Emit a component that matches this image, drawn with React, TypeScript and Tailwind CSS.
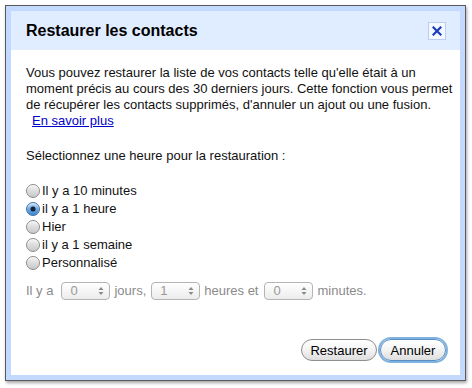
import React from "react";

function Radio({ checked }: { checked?: boolean }) {
  return checked ? (
    <span className="relative inline-block h-[14px] w-[14px] shrink-0 rounded-full border border-[#3d6fa8] bg-gradient-to-b from-[#bcd8f4] via-[#6fa6dc] to-[#3f86d2] shadow-[inset_0_1px_1px_rgba(255,255,255,0.7)]">
      <span className="absolute left-1/2 top-1/2 h-[5px] w-[5px] -translate-x-1/2 -translate-y-1/2 rounded-full bg-[#10213a]" />
    </span>
  ) : (
    <span className="inline-block h-[14px] w-[14px] shrink-0 rounded-full border border-[#8c8c8c] bg-gradient-to-b from-[#f4f4f4] via-[#dcdcdc] to-[#c8c8c8] shadow-[inset_0_1px_1px_rgba(255,255,255,0.8)]" />
  );
}

function Spin({ value }: { value: string }) {
  return (
    <span className="flex h-[18px] w-[49px] items-center justify-between rounded-[4px] border border-[#b4b4b4] bg-gradient-to-b from-[#ffffff] to-[#ececec] pl-[8px] pr-[5px] text-[#999]">
      <span>{value}</span>
      <svg width="6" height="10" viewBox="0 0 6 10">
        <path d="M3 1 L5.5 4 L0.5 4 Z" fill="#8a8a8a" />
        <path d="M3 9 L5.5 6 L0.5 6 Z" fill="#8a8a8a" />
      </svg>
    </span>
  );
}

export default function App() {
  const options = [
    { label: "Il y a 10 minutes" },
    { label: "il y a 1 heure", checked: true },
    { label: "Hier" },
    { label: "il y a 1 semaine" },
    { label: "Personnalisé" },
  ];
  return (
    <div className="h-[388px] w-[472px] bg-white pl-[5px] pt-[5px] font-['Liberation_Sans',Arial,sans-serif] text-[13px] text-[#111]">
      <div className="w-[461px] border border-[#5a5a5a] shadow-[1px_2px_3px_rgba(0,0,0,0.35)]">
        <div className="border-[5px] border-[#c3d9ff]">
          <div className="flex h-[39px] items-center justify-between bg-[#e0ecff] pl-[15px] pr-[14px]">
            <span className="text-[16px] font-bold text-black">Restaurer les contacts</span>
            <span className="flex h-[18px] w-[18px] items-center justify-center border border-[#b9cdf5] bg-[#f4f8ff]">
              <svg width="10" height="10" viewBox="0 0 10 10">
                <path d="M1.5 1.5 L8.5 8.5 M8.5 1.5 L1.5 8.5" stroke="#1c3bbf" strokeWidth="2.2" strokeLinecap="square" />
              </svg>
            </span>
          </div>
          <div className="flex flex-col bg-white pb-[14px] pl-[15px] pr-[14px] pt-[15px]">
            <p className="mr-[-10px] leading-[16px]">
              Vous pouvez restaurer la liste de vos contacts telle qu'elle était à un
              <br />
              moment précis au cours des 30 derniers jours. Cette fonction vous permet
              <br />
              de récupérer les contacts supprimés, d'annuler un ajout ou une fusion.
            </p>
            <a className="ml-[6px] leading-[16px] text-[#0000cc] underline">En savoir plus</a>
            <p className="mt-[19px] leading-[16px]">Sélectionnez une heure pour la restauration :</p>
            <div className="mt-[18px] flex flex-col">
              {options.map((o) => (
                <label key={o.label} className="flex h-[18px] items-center gap-[2px]">
                  <Radio checked={o.checked} />
                  <span className="leading-[16px]">{o.label}</span>
                </label>
              ))}
            </div>
            <div className="mt-[10px] flex h-[18px] items-center text-[#8a8a8a]">
              <span className="mr-[8px]">Il y a</span>
              <Spin value="0" />
              <span className="ml-[4px] mr-[5px]">jours,</span>
              <Spin value="1" />
              <span className="ml-[4px] mr-[6px]">heures et</span>
              <Spin value="0" />
              <span className="ml-[4px]">minutes.</span>
            </div>
            <div className="mt-[39px] flex justify-end gap-[3px]">
              <button className="h-[22px] w-[76px] rounded-full border border-[#8e8e8e] bg-gradient-to-b from-[#ffffff] via-[#f3f3f3] to-[#dedede] text-[13px] leading-none text-black">
                Restaurer
              </button>
              <button className="h-[22px] w-[66px] rounded-full border border-[#5a8fc4] bg-gradient-to-b from-[#ffffff] via-[#f3f3f3] to-[#dedede] text-[13px] leading-none text-black shadow-[0_0_0_2px_#7fb2e0]">
                Annuler
              </button>
            </div>
          </div>
        </div>
      </div>
    </div>
  );
}
